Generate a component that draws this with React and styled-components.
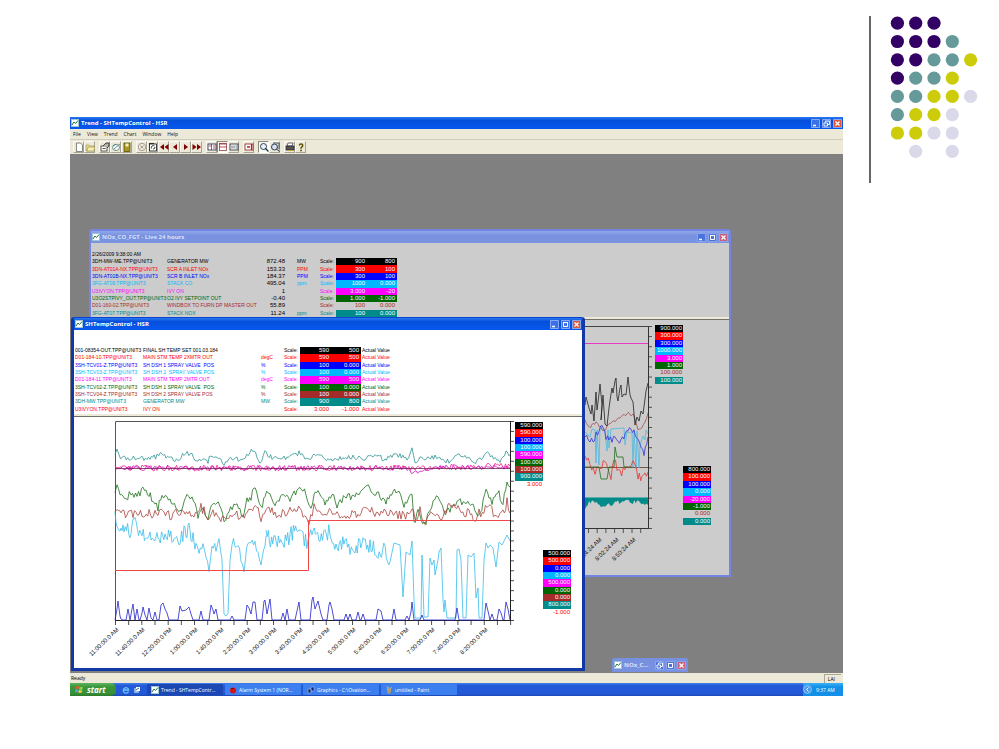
import React from "react";
import styled, { createGlobalStyle } from "styled-components";

const DOT_ROWS = ["PPP", "PPPT", "PPTTY", "PTTY", "TTYYL", "TYYL", "YYLL", " L L"];
const DOT_COLORS = { P: "#330066", T: "#669999", Y: "#cccc0a", L: "#d9d9ea" };

const SH_TAGS = [
  { tag: "001-08354-OUT.TPP@UNIT3", text: "FINAL SH TEMP SET 001.03.184", unit: "", color: "#000", hi: "590", lo: "500" },
  { tag: "D01-184-10.TPP@UNIT3", text: "MAIN STM TEMP 2XMTR OUT", unit: "degC", color: "#f00", hi: "590", lo: "500" },
  { tag: "3SH-TCV01-Z.TPP@UNIT3", text: "SH DSH 1 SPRAY VALVE  POS", unit: "%", color: "#00f", hi: "100", lo: "0.000" },
  { tag: "3SH-TCV03-Z.TPP@UNIT3", text: "SH DSH 2  SPRAY VALVE POS", unit: "%", color: "#00b7ff", hi: "100", lo: "0.000" },
  { tag: "D01-184-11.TPP@UNIT3", text: "MAIN STM TEMP 2MTR OUT", unit: "degC", color: "#f0f", hi: "590", lo: "500" },
  { tag: "3SH-TCV02-Z.TPP@UNIT3", text: "SH DSH 1 SPRAY VALVE  POS", unit: "%", color: "#006400", hi: "100", lo: "0.000" },
  { tag: "3SH-TCV04-Z.TPP@UNIT3", text: "SH DSH 2 SPRAY VALVE POS", unit: "%", color: "#a52a2a", hi: "100", lo: "0.000" },
  { tag: "3DH-MW.TPP@UNIT3", text: "GENERATOR MW", unit: "MW", color: "#008b8b", hi: "900", lo: "800" },
  { tag: "U3IVYON.TPP@UNIT3", text: "IVY ON", unit: "", color: "#f00", hi: "3.000", lo: "-1.000", plain: true },
];

const NOX_TAGS = [
  { tag: "3DH-MW-ME.TPP@UNIT3", text: "GENERATOR MW", value: "872.48", unit: "MW", color: "#000", hi: "900", lo: "800" },
  { tag: "3DN-AT01A-NX.TPP@UNIT3", text: "SCR A INLET NOx", value: "153.33", unit: "PPM", color: "#f00", hi: "300", lo: "100" },
  { tag: "3DN-AT01B-NX.TPP@UNIT3", text: "SCR B INLET NOx", value: "184.37", unit: "PPM", color: "#00f", hi: "300", lo: "100" },
  { tag: "3FG-AT09.TPP@UNIT3", text: "STACK CO", value: "495.04", unit: "ppm", color: "#00b7ff", hi: "1000", lo: "0.000" },
  { tag: "U3IVYON.TPP@UNIT3", text: "IVY ON", value: "1", unit: "", color: "#f0f", hi: "3.000", lo: "-20" },
  { tag: "U3O2STPIVY_OUT.TPP@UNIT3", text: "O2 IVY SETPOINT OUT", value: "-0.40", unit: "", color: "#006400", hi: "1.000", lo: "-1.000" },
  { tag: "D01-160-02.TPP@UNIT3", text: "WINDBOX TO FURN DP MASTER OUT", value: "55.89", unit: "", color: "#a52a2a", hi: "100", lo: "0.000", plain: true },
  { tag: "3FG-AT07.TPP@UNIT3", text: "STACK NOX", value: "11.24", unit: "ppm", color: "#008b8b", hi: "100", lo: "0.000" },
];

const SH_TOP = ["590.000", "590.000", "100.000", "100.000", "590.000", "100.000", "100.000", "900.000", "3.000"];
const SH_BOTTOM = ["500.000", "500.000", "0.000", "0.000", "500.000", "0.000", "0.000", "800.000", "-1.000"];
const NOX_TOP = ["900.000", "300.000", "300.000", "1000.000", "3.000", "1.000", "100.000", "100.000"];
const NOX_BOTTOM = ["800.000", "100.000", "100.000", "0.000", "-20.000", "-1.000", "0.000", "0.000"];

const SH_TIMES = [
  "11:00:00.0 AM", "11:40:00.0 AM", "12:20:00.0 PM", "1:00:00.0 PM", "1:40:00.0 PM",
  "2:20:00.0 PM", "3:00:00.0 PM", "3:40:00.0 PM", "4:20:00.0 PM", "5:00:00.0 PM",
  "5:40:00.0 PM", "6:20:00.0 PM", "7:00:00.0 PM", "7:40:00.0 PM", "8:20:00.0 PM",
];

// small repeatable noise so that the curves look the same on every render
function noisy(points, amp, seed, step = 1.5) {
  let s = seed;
  const rand = () => {
    s = (s * 16807) % 2147483647;
    return s / 2147483647 - 0.5;
  };
  rand();
  rand();
  const out = [];
  for (let i = 0; i < points.length - 1; i++) {
    const [x1, y1] = points[i];
    const [x2, y2] = points[i + 1];
    const n = Math.max(1, Math.round((x2 - x1) / step));
    for (let k = 0; k < n; k++) {
      const t = k / n;
      const y = y1 + (y2 - y1) * t + rand() * amp * 2;
      out.push(`${(x1 + (x2 - x1) * t).toFixed(1)},${y.toFixed(1)}`);
    }
  }
  out.push(points[points.length - 1].join(","));
  return out.join(" ");
}

// peaks standing on a zero line
function peaks(groups, base, from, to) {
  const out = [`${from},${base}`];
  groups.forEach((g) => {
    out.push(`${g[0][0] - 2},${base}`);
    g.forEach((p) => out.push(p.join(",")));
    out.push(`${g[g.length - 1][0] + 2},${base}`);
  });
  out.push(`${to},${base}`);
  return out.join(" ");
}

const TEAL = [[115, 456], [117, 450], [119, 457], [135, 458], [150, 459], [157, 456], [162, 453], [166, 457], [178, 462], [184, 453], [192, 455], [198, 463], [204, 457], [208, 461], [212, 454], [220, 459], [224, 464], [229, 458], [240, 460], [245, 456], [250, 452], [254, 451], [260, 462], [265, 453], [272, 458], [290, 458], [299, 453], [305, 457], [310, 461], [314, 453], [325, 459], [340, 459], [350, 457], [365, 458], [378, 456], [385, 460], [392, 455], [400, 455], [407, 459], [412, 450], [415, 465], [420, 458], [435, 457], [446, 462], [452, 460], [458, 453], [465, 457], [477, 462], [486, 453], [492, 458], [500, 461], [506, 452], [510, 455]];

const GREEN = [[115, 493], [117, 486], [120, 494], [126, 499], [131, 492], [137, 497], [143, 489], [149, 494], [153, 500], [158, 508], [162, 495], [170, 499], [176, 508], [180, 511], [187, 493], [192, 497], [198, 515], [202, 507], [208, 518], [213, 504], [217, 501], [221, 510], [224, 521], [229, 510], [237, 506], [243, 516], [247, 500], [251, 499], [254, 486], [258, 500], [261, 509], [265, 495], [270, 492], [275, 503], [282, 496], [290, 498], [297, 490], [300, 486], [306, 493], [311, 509], [314, 494], [318, 490], [325, 502], [332, 494], [337, 506], [345, 497], [355, 497], [362, 490], [367, 487], [377, 494], [386, 502], [393, 491], [399, 490], [404, 504], [408, 500], [412, 491], [414, 524], [418, 512], [421, 520], [426, 523], [430, 508], [438, 497], [444, 512], [450, 511], [457, 500], [465, 504], [472, 502], [479, 518], [486, 490], [492, 502], [499, 494], [503, 503], [507, 482], [510, 487]];

const BROWN = [[115, 514], [117, 508], [121, 514], [130, 513], [142, 513], [152, 515], [161, 510], [170, 515], [182, 512], [194, 517], [201, 507], [207, 516], [216, 512], [224, 520], [232, 512], [240, 518], [250, 508], [254, 505], [261, 517], [266, 509], [278, 515], [290, 511], [300, 511], [309, 520], [314, 508], [325, 512], [340, 516], [352, 515], [364, 511], [378, 512], [392, 515], [404, 516], [412, 507], [415, 521], [420, 510], [425, 521], [432, 509], [440, 517], [448, 508], [458, 508], [466, 513], [476, 517], [487, 506], [495, 514], [503, 514], [507, 502], [510, 513]];

const CYAN_A = [[115, 519], [119, 525], [124, 524], [130, 530], [135, 523], [141, 532], [150, 534], [158, 541], [165, 536], [172, 537], [178, 539], [184, 533], [189, 529], [193, 540], [196, 543]];
const CYAN_B = [[199, 555], [203, 545], [209, 571], [212, 543], [216, 548], [219, 542], [222, 556], [224, 612], [226, 617], [228, 616], [230, 560], [232, 541], [238, 545], [244, 571], [248, 541], [255, 545], [261, 561], [265, 542]];
const CYAN_C = [[266, 536], [275, 543], [283, 541], [290, 536], [299, 524], [303, 538], [308, 545], [312, 530], [320, 541], [330, 531], [336, 545], [345, 544], [355, 551], [362, 541], [370, 546], [378, 551], [385, 548]];
const CYAN_D = [[390, 562], [394, 543], [400, 545], [403, 597], [406, 552], [410, 555], [412, 541], [414, 600], [415, 618], [421, 618], [422, 555], [424, 617], [428, 617], [430, 558], [432, 565], [434, 560], [435, 575], [438, 560], [439, 552], [441, 548], [443, 600], [444, 612], [445, 600], [447, 618], [456, 618], [457, 550], [459, 549], [461, 560], [463, 618], [466, 618], [468, 555], [471, 557], [474, 553], [476, 598], [478, 588], [479, 618], [482, 618], [484, 560], [486, 543], [488, 548], [490, 545], [493, 548], [496, 567], [499, 542], [502, 545], [504, 541], [507, 535], [510, 541]];

const BLUE = [
  [[117, 609], [118, 601], [120, 616], [121, 619]], [[128, 609]], [[132, 609], [133, 604]], [[137, 609]], [[142, 613], [143, 607], [145, 615]],
  [[149, 608], [151, 618]], [[155, 612]], [[161, 605], [163, 603], [165, 609], [167, 613]],
  [[180, 606], [182, 611], [186, 610], [189, 607], [191, 614]], [[201, 611]],
  [[211, 605], [213, 610], [214, 614], [216, 609]], [[232, 616]],
  [[247, 605], [249, 608], [251, 614], [253, 602], [255, 602]], [[264, 601], [265, 600], [267, 614], [270, 599]],
  [[283, 613]], [[287, 609]], [[297, 611], [299, 602]], [[312, 600], [313, 597], [315, 609], [318, 601], [321, 614]],
  [[329, 605], [330, 602], [332, 609]], [[346, 614]], [[350, 614]], [[358, 612]], [[363, 614]], [[378, 609], [381, 611]],
  [[394, 609]], [[407, 616]], [[411, 612], [412, 602]], [[422, 615]], [[457, 608]], [[486, 603], [488, 611]], [[492, 614]],
  [[499, 609], [501, 613]], [[506, 602], [508, 609]],
];

const NOX_BLACK = "585,405 586,397 589,408 591,414 592,405 594,421 596,392 597,410 599,394 600,384 602,405 601,420 603,395 605,424 607,426 609,408 611,394 612,388 613,393 615,381 616,378 617,397 618,401 620,388 621,385 622,397 624,394 626,395 628,377 630,395 631,398 633,402 635,425 637,417 639,421 641,411 643,414 645,399 646,391 648,383";
const NOX_BROWN = [[585, 418], [589, 428], [596, 423], [604, 430], [612, 422], [620, 418], [627, 413], [633, 415], [638, 428], [642, 429], [648, 413]];
const NOX_BLUE = [[585, 436], [590, 442], [596, 436], [602, 427], [606, 438], [615, 440], [621, 443], [628, 430], [634, 432], [640, 441], [644, 455], [648, 437]];
const NOX_CYAN = "585,432 590,437 592,429 595,430 596,463 597,430 599,465 600,428 605,431 607,451 608,430 609,448 611,429 624,428 625,445 627,432 632,433 633,467 634,431 636,469 637,431 639,468 640,445 643,436 645,440 646,430 648,434";
const NOX_RED = [[585, 459], [590, 463], [595, 473], [600, 469], [605, 461], [611, 476], [614, 459], [620, 474], [628, 466], [633, 460], [638, 476], [642, 479], [648, 472]];
const NOX_STACK = [[585, 507], [589, 503], [595, 502], [601, 506], [612, 504], [618, 502], [630, 502], [640, 502], [648, 505]];

const range = (n) => Array.from({ length: n }, (_, i) => i);

function TrendIcon() {
  return (
    <svg width="8" height="8" viewBox="0 0 8 8">
      <rect x="0.5" y="0.5" width="7" height="7" fill="#fff" stroke="#9fc4d8" />
      <path d="M1 6 L3 3 L4.5 4.5 L7 1.5" fill="none" stroke="#1c7a3c" />
    </svg>
  );
}

const TOOL_ICONS = {
  new: <path d="M2.5 1h4l2 2v6.500h-6z" fill="#fff" stroke="#555" strokeWidth="0.7" />,
  open: (
    <>
      <path d="M1 3h3l1 1h4v5H1z" fill="#e6d98a" stroke="#8a8040" strokeWidth="0.5" />
      <path d="M2 9l1-4h7l-1 4z" fill="#f4ecb0" stroke="#8a8040" strokeWidth="0.5" />
    </>
  ),
  properties: (
    <>
      <rect x="1" y="4" width="6" height="5" fill="#fff" stroke="#333" strokeWidth="0.8" />
      <path d="M3 4l3-3h3v3l-2 2M2.500 6.500h3" fill="#b5b5a5" stroke="#222" strokeWidth="0.8" />
    </>
  ),
  edit: (
    <>
      <ellipse cx="5" cy="5.500" rx="3.500" ry="3" fill="#fff" stroke="#477" strokeWidth="0.8" />
      <path d="M3 7l6-5M2 4l3-2" stroke="#477" strokeWidth="0.8" />
    </>
  ),
  save: (
    <>
      <rect x="2" y="1" width="6" height="8.500" fill="#a89a24" stroke="#554c00" strokeWidth="0.8" />
      <rect x="3.500" y="1.500" width="3" height="3" fill="#f4efc4" />
    </>
  ),
  stop: (
    <>
      <circle cx="5" cy="5" r="3.700" fill="none" stroke="#a5a294" />
      <path d="M3.500 3.500l3 3M6.500 3.500l-3 3" stroke="#a5a294" />
    </>
  ),
  refresh: (
    <>
      <rect x="1.500" y="2" width="7" height="7" fill="#fff" stroke="#111" strokeWidth="0.8" />
      <path d="M3.500 6.500a2 2 0 0 1 3-2.500M5 7a2 2 0 0 0 2-2M1 1.500h5" fill="none" stroke="#111" strokeWidth="0.8" />
    </>
  ),
  first: <path d="M5 2v6L1 5zM9.500 2v6l-4-3z" fill="#800000" />,
  back: <path d="M7 2v6L3 5z" fill="#800000" />,
  forward: <path d="M3 2v6l4-3z" fill="#800000" />,
  last: <path d="M0.500 2v6l4-3zM5 2v6l4-3z" fill="#800000" />,
  columns: (
    <>
      <rect x="1" y="2" width="8" height="6" fill="#fff" stroke="#224" strokeWidth="0.8" />
      <path d="M4.500 2v6M6 4h2M6 6h2M2 4h2" stroke="#a22" strokeWidth="0.8" />
    </>
  ),
  split: (
    <>
      <rect x="1.500" y="1.500" width="7" height="7" fill="#fff" stroke="#844" strokeWidth="0.8" />
      <path d="M1.500 2h7M1.500 5h7" stroke="#a23" strokeWidth="0.8" />
    </>
  ),
  grid: (
    <>
      <rect x="1" y="2" width="8" height="6" fill="#fff" stroke="#223" strokeWidth="0.8" />
      <path d="M3 3.500v3M5 3.500v3M6.500 4h1.500M6.500 6h1.500" stroke="#345" strokeWidth="0.8" />
    </>
  ),
  chart: (
    <>
      <rect x="1" y="2" width="8" height="6" fill="#fff" stroke="#822" strokeWidth="0.8" />
      <path d="M7.500 2v6M3 5h3" stroke="#b22" strokeWidth="1.300" />
    </>
  ),
  zoom: (
    <>
      <circle cx="4.500" cy="4.500" r="3" fill="#eef" stroke="#134" strokeWidth="0.900" />
      <path d="M6.500 6.500l3 3" stroke="#134" strokeWidth="1.300" />
    </>
  ),
  zoomAll: (
    <>
      <path d="M3 1h6v6" fill="none" stroke="#345" strokeWidth="0.900" />
      <circle cx="4.500" cy="5" r="3" fill="#dde" stroke="#134" strokeWidth="0.900" />
      <path d="M6.500 7l3 2.500" stroke="#134" />
    </>
  ),
  print: (
    <>
      <path d="M3 1h5l-1 3H2z" fill="#fff" stroke="#333" strokeWidth="0.700" />
      <rect x="1" y="4" width="8" height="4" fill="#555" stroke="#222" strokeWidth="0.700" />
      <path d="M2 8.500h6" stroke="#ba3" />
    </>
  ),
  help: (
    <>
      <path d="M3.500 3.500a1.600 1.600 0 1 1 2.400 1.400c-.6.400-.9.700-.9 1.800" fill="none" stroke="#5b5200" strokeWidth="1.500" />
      <circle cx="5" cy="8.500" r="0.900" fill="#5b5200" />
    </>
  ),
};

const TOOL_GROUPS = [
  ["new", "open"],
  ["properties", "edit", "save"],
  ["stop", "refresh", "first", "back", "forward", "last"],
  ["columns", "split", "grid"],
  ["chart"],
  ["zoom", "zoomAll"],
  ["print", "help"],
];

const PRESSED = ["split", "zoom"];

function Controls({ kinds = ["min", "max", "close"], dim }) {
  const shapes = {
    min: <path d="M2 6.500h3" stroke="#fff" strokeWidth="1.500" />,
    max: <path d="M2 2.500h5M2.500 2v4.500h4V2" fill="none" stroke="#fff" />,
    restore: <path d="M3.500 3.500V2h4v3.500H6M2 4h3.500v3H2z" fill="none" stroke="#fff" strokeWidth="0.900" />,
    close: <path d="M2.500 2.500l4 4M6.500 2.500l-4 4" stroke="#fff" strokeWidth="1.200" />,
  };
  return (
    <ControlRow>
      {kinds.map((k) => (
        <ControlButton key={k} aria-label={k} $close={k === "close"} $dim={dim}>
          <svg width="9" height="9" viewBox="0 0 9 9">{shapes[k]}</svg>
        </ControlButton>
      ))}
    </ControlRow>
  );
}

function TagTable({ tags, live }) {
  return (
    <TagGrid $live={live}>
      <colgroup>
        <Col $w={live ? 75 : 68} />
        <Col $w={live ? 88 : 118} />
        {live && <Col $w={30} />}
        <Col $w={live ? 35 : 23} />
        <Col $w={16} />
        <Col $w={31} />
        <Col $w={30} />
        {!live && <Col $w={36} />}
      </colgroup>
      <tbody>
        {tags.map((t) => (
          <TagRow key={t.tag} $color={t.color}>
            <td>{t.tag}</td>
            <td>{t.text}</td>
            {live && <ValueCell>{t.value}</ValueCell>}
            <UnitCell $live={live}>{t.unit}</UnitCell>
            <td>Scale:</td>
            <ScaleCell $color={t.color} $plain={t.plain}>{t.hi}</ScaleCell>
            <ScaleCell $color={t.color} $plain={t.plain}>{t.lo}</ScaleCell>
            {!live && <ActualCell>Actual Value</ActualCell>}
          </TagRow>
        ))}
      </tbody>
    </TagGrid>
  );
}

function Legend({ values, tags, low }) {
  return (
    <LegendBox $rows={values.length} $low={low}>
      {values.map((v, i) => (
        <LegendItem key={i} $color={tags[i].color} $plain={tags[i].plain}>{v}</LegendItem>
      ))}
    </LegendBox>
  );
}

function Curve({ points, color }) {
  return <polyline points={points} fill="none" stroke={color} strokeWidth="0.8" />;
}

function TimeLabel({ x, y, children }) {
  return (
    <AxisText x={x} y={y} textAnchor="end" transform={`rotate(-44 ${x} ${y})`}>
      {children}
    </AxisText>
  );
}

function ShChart() {
  return (
    <ChartSvg viewBox="74 417 441 251">
      <path d="M115.500 620.500V421.500H510.500" fill="none" stroke="#555" />
      <Curve points={noisy(TEAL, 2.5, 77)} color="#2f9494" />
      <Curve points={noisy([[115, 468], [412, 468], [510, 466]], 3, 12)} color="#f0208c" />
      <Curve points={noisy([[115, 468], [404, 468], [413, 472], [440, 467], [510, 468]], 2.5, 431)} color="#d010c0" />
      <path d="M115 468.500H510" stroke="#702050" strokeWidth="0.8" />
      <Curve points={noisy(GREEN, 3.5, 391)} color="#1c701c" />
      <Curve points={noisy(BROWN, 5, 93)} color="#a8423c" />
      <Curve points={noisy(CYAN_A, 8, 1931, 1.1)} color="#39bdea" />
      <Curve points={noisy([CYAN_A[CYAN_A.length - 1], ...CYAN_B, CYAN_C[0]], 4, 55)} color="#39bdea" />
      <Curve points={noisy([...CYAN_C, CYAN_D[0]], 8, 871, 1.2)} color="#39bdea" />
      <Curve points={CYAN_D.map((p) => p.join(",")).join(" ")} color="#39bdea" />
      <path d="M115 570.500H308.500V520.500H510" fill="none" stroke="#f04848" />
      <path d="M510.500 421V620.500H115" fill="none" stroke="#222" />
      <Curve points={peaks(BLUE, 620, 115, 510)} color="#2222cc" />
      {range(21).map((i) => (
        <path key={i} d={`M510 ${421.5 + i * 9.95}h4`} stroke="#222" strokeWidth="0.8" />
      ))}
      {range(31).map((i) => (
        <path key={i} d={`M${115.5 + i * 13.17} 620v5`} stroke="#222" strokeWidth="0.8" />
      ))}
      {SH_TIMES.map((t, i) => (
        <TimeLabel key={t} x={119 + Math.round(i * 26.33)} y={630}>{t}</TimeLabel>
      ))}
    </ChartSvg>
  );
}

function NoxChart() {
  return (
    <ChartSvg viewBox="91 320 564 254">
      <path d="M130 326.500H648.500" stroke="#444" />
      <path d="M130 343.500H648" stroke="#e838c8" />
      <path d="M130 467.500H648" stroke="#7a5848" />
      <polygon points={`585,497.500 ${noisy(NOX_STACK, 2.5, 311)} 648,497.500`} fill="#008b8b" />
      <Curve points={NOX_CYAN} color="#4cb8e0" />
      <Curve points={noisy(NOX_BROWN, 2, 37)} color="#a05050" />
      <Curve points={noisy(NOX_RED, 4, 871)} color="#e83030" />
      <Curve points={noisy(NOX_BLUE, 4, 153)} color="#3030e0" />
      <Curve points="585,467 599,467 601,479 607,479 609,467 614,467 615,447 617,457 623,457 624,467 632,467" color="#207020" />
      <Curve points={NOX_BLACK} color="#222" />
      <path d="M648.500 326V528.500H130" fill="none" stroke="#333" />
      {range(21).map((i) => (
        <path key={i} d={`M648 ${326.5 + i * 10.1}h4`} stroke="#333" strokeWidth="0.8" />
      ))}
      {range(7).map((i) => (
        <path key={i} d={`M${588.5 + i * 8.7} 528v5`} stroke="#333" strokeWidth="0.8" />
      ))}
      <TimeLabel x={602} y={540}>7:14:24 AM</TimeLabel>
      <TimeLabel x={619} y={540}>8:02:24 AM</TimeLabel>
      <TimeLabel x={636} y={540}>8:50:24 AM</TimeLabel>
    </ChartSvg>
  );
}

function App() {
  return (
    <>
      <GlobalStyle />
      <Slide>
        <Desktop>
          <TitleBar>
            <TrendIcon />
            <TitleText>Trend - SHTempControl - HSR</TitleText>
            <Controls kinds={["min", "restore", "close"]} />
          </TitleBar>
          <MenuBar>
            {["File", "View", "Trend", "Chart", "Window", "Help"].map((m) => (
              <MenuItem key={m}>{m}</MenuItem>
            ))}
          </MenuBar>
          <Toolbar>
            {TOOL_GROUPS.map((group) => (
              <ToolGroup key={group[0]}>
                {group.map((name) => (
                  <ToolButton key={name} aria-label={name} $pressed={PRESSED.includes(name)}>
                    <svg width="10" height="10" viewBox="0 0 10 10">{TOOL_ICONS[name]}</svg>
                  </ToolButton>
                ))}
              </ToolGroup>
            ))}
          </Toolbar>

          <Workspace>
            <NoxWindow>
              <TitleBar $dim>
                <TrendIcon />
                <TitleText $dim>NOx_CO_FGT - Live 24 hours</TitleText>
                <Controls dim />
              </TitleBar>
              <TagPanel $live>
                <Stamp>2/26/2009 9:38:00 AM</Stamp>
                <TagTable tags={NOX_TAGS} live />
              </TagPanel>
              <PlotPanel>
                <NoxChart />
                <Legend values={NOX_TOP} tags={NOX_TAGS} />
                <Legend values={NOX_BOTTOM} tags={NOX_TAGS} low />
              </PlotPanel>
            </NoxWindow>

            <ShWindow>
              <TitleBar>
                <TrendIcon />
                <TitleText>SHTempControl - HSR</TitleText>
                <Controls />
              </TitleBar>
              <TagPanel>
                <TagTable tags={SH_TAGS} />
              </TagPanel>
              <PlotPanel>
                <ShChart />
                <Legend values={SH_TOP} tags={SH_TAGS} />
                <Legend values={SH_BOTTOM} tags={SH_TAGS} low />
              </PlotPanel>
            </ShWindow>

            <MinimizedWindow>
              <TrendIcon />
              <TitleText $dim>NOx_C...</TitleText>
              <Controls kinds={["restore", "max", "close"]} dim />
            </MinimizedWindow>
          </Workspace>

          <StatusBar>
            <span>Ready</span>
            <StatusCell>LAI</StatusCell>
          </StatusBar>

          <Taskbar>
            <StartButton>
              <svg width="9" height="9" viewBox="0 0 9 9">
                <path d="M1 1.500q1.500-1 3 0L3.500 4q-1.500-.8-3 0z" fill="#f0562c" />
                <path d="M4.700 1.800q1.500.8 3.300 0L7.300 4.400q-1.700.8-3.100 0z" fill="#8cd44c" />
                <path d="M.4 4.700q1.500-.8 3 0L2.800 7.300q-1.500-.8-3 0z" fill="#5b9cf0" />
                <path d="M4 5q1.500.8 3.200 0L6.600 7.600q-1.700.8-3.200 0z" fill="#fccf3c" />
              </svg>
              start
            </StartButton>
            <QuickLaunch>
              <svg width="8" height="8" viewBox="0 0 8 8">
                <path d="M6.500 5.500A2.700 2.700 0 1 1 6.700 4H2" fill="none" stroke="#6cc4ff" strokeWidth="1.300" />
              </svg>
              <svg width="8" height="8" viewBox="0 0 8 8">
                <rect x="1" y="2" width="5" height="5" rx="1" fill="#8fb8e8" />
                <path d="M3 1h4v4H3z" fill="#fff" />
                <path d="M3 4l3-2" stroke="#36a" />
              </svg>
            </QuickLaunch>
            <TaskButton $active><TrendIcon />Trend - SHTempContr...</TaskButton>
            <TaskButton>
              <svg width="8" height="8" viewBox="0 0 8 8">
                <circle cx="4" cy="4.500" r="3" fill="#d41414" />
                <path d="M2 2.500h3" stroke="#701010" />
              </svg>
              Alarm System 1 (NOR...
            </TaskButton>
            <TaskButton>
              <svg width="8" height="8" viewBox="0 0 8 8">
                <path d="M1 3h3v4H1zM4 1h3v4H4z" fill="#13246c" stroke="#9cc4f4" strokeWidth="0.600" />
              </svg>
              Graphics - C:\Ovation...
            </TaskButton>
            <TaskButton>
              <svg width="8" height="8" viewBox="0 0 8 8">
                <path d="M2 3h4L5.500 7.500h-3z" fill="#b99864" />
                <path d="M3 4L2 .5M4 4V.5M5 4L6.500 1" stroke="#e0b060" strokeWidth="0.900" />
              </svg>
              untitled - Paint
            </TaskButton>
            <Tray>
              <svg width="9" height="9" viewBox="0 0 9 9">
                <circle cx="4.500" cy="4.500" r="4" fill="#4b9cf0" stroke="#b8e0ff" strokeWidth="0.600" />
                <path d="M5.500 2.500l-2 2 2 2" fill="none" stroke="#fff" />
              </svg>
              9:37 AM
            </Tray>
          </Taskbar>
        </Desktop>

        <Ornament>
          <svg width="128" height="167" viewBox="871 16 128 167">
            {DOT_ROWS.map((row, r) =>
              row.split("").map((c, i) =>
                c === " " ? null : (
                  <circle key={`${r}-${i}`} cx={897.4 + i * 18.3} cy={23.2 + r * 18.3} r="6.6" fill={DOT_COLORS[c]} />
                )
              )
            )}
          </svg>
        </Ornament>
      </Slide>
    </>
  );
}

const GlobalStyle = createGlobalStyle`
  * {
    box-sizing: border-box;
  }

  body {
    margin: 0;
    background: #fff;
    font-family: "Liberation Sans", Arial, sans-serif;
    font-size: 6px;
  }

  button {
    padding: 0;
    border: none;
    background: none;
    font: inherit;
    color: inherit;
  }

  svg {
    display: block;
    flex: none;
  }
`;

const Slide = styled.main`
  min-height: 100vh;
  display: flex;
  align-items: stretch;
  gap: 26px;
  padding: 16px 0 53px 70px;
`;

const Desktop = styled.section`
  flex: 1;
  min-width: 0;
  margin-top: 101px;
  display: flex;
  flex-direction: column;
`;

const Ornament = styled.aside`
  flex: none;
  align-self: flex-start;
  border-left: 2px solid #666;
`;

const TitleBar = styled.header`
  flex: none;
  height: 12px;
  display: flex;
  align-items: center;
  gap: 2px;
  padding: 0 1px;
  background: ${({ $dim }) =>
    $dim
      ? "linear-gradient(#8ea8ea, #7890de 40%, #7a96e2)"
      : "linear-gradient(#2a78f0, #0450dc 30%, #0658ee)"};
`;

const TitleText = styled.span`
  flex: 1;
  min-width: 0;
  overflow: hidden;
  white-space: nowrap;
  font-family: "Open Sans", "Noto Sans", sans-serif;
  font-size: 6px;
  line-height: 8px;
  font-weight: 700;
  color: ${({ $dim }) => ($dim ? "#d6e0fa" : "#fff")};
`;

const ControlRow = styled.div`
  display: flex;
  gap: 2px;
`;

const ControlButton = styled.button`
  width: 9px;
  height: 9px;
  border-radius: 1px;
  background: ${({ $close, $dim }) =>
    $close ? ($dim ? "#c8607c" : "#e0583a") : $dim ? "#4a74dc" : "#3a70e8"};
  box-shadow: inset 0 0 0 1px ${({ $dim }) => ($dim ? "#8ca6ee" : "#86a8f4")};
`;

const MenuBar = styled.nav`
  flex: none;
  height: 11px;
  display: flex;
  align-items: center;
  gap: 6px;
  padding-left: 3px;
  background: #ece9d8;
  border-bottom: 1px solid #cfccbc;
`;

const MenuItem = styled.button`
  font-family: "Open Sans", "Noto Sans", sans-serif;
  font-size: 5px;
  line-height: 8px;
  color: #111;
`;

const Toolbar = styled.div`
  flex: none;
  height: 14px;
  display: flex;
  align-items: center;
  gap: 4px;
  padding-left: 3px;
  background: #ece9d8;
`;

const ToolGroup = styled.div`
  display: flex;
`;

const ToolButton = styled.button`
  width: 11px;
  height: 12px;
  display: flex;
  align-items: center;
  justify-content: center;
  border: 1px solid;
  border-color: ${({ $pressed }) =>
    $pressed ? "#8c897a #fff #fff #8c897a" : "#fbfaf4 #a5a294 #a5a294 #fbfaf4"};
  background: ${({ $pressed }) => ($pressed ? "#f8f7f0" : "transparent")};
`;

const Workspace = styled.div`
  position: relative;
  flex: 1;
  min-height: 500px;
  overflow: hidden;
  background: #808080;
`;

const ChildWindow = styled.section`
  position: absolute;
  display: flex;
  flex-direction: column;
`;

const NoxWindow = styled(ChildWindow)`
  left: 19px;
  top: 75px;
  width: 642px;
  height: 348px;
  border: 2px solid #7484e0;
  border-radius: 3px 3px 0 0;
  background: #ccc;
`;

const ShWindow = styled(ChildWindow)`
  left: 1px;
  top: 163px;
  width: 514px;
  height: 354px;
  border: 3px solid #1238a8;
  border-top: 1px solid #0a44cc;
  border-radius: 3px 3px 0 0;
  background: #fff;
`;

const MinimizedWindow = styled.section`
  position: absolute;
  left: 542px;
  top: 504px;
  width: 76px;
  height: 14px;
  display: flex;
  align-items: center;
  gap: 2px;
  padding: 0 2px;
  border-radius: 2px 2px 0 0;
  background: #7890e0;
`;

const TagPanel = styled.div`
  flex: none;
  height: ${({ $live }) => ($live ? 77 : 87)}px;
  padding: ${({ $live }) => ($live ? "7px 0 0 1px" : "17px 0 0 1px")};
  border-bottom: 1px solid #706f68;
  box-shadow: inset 0 -2px 0 #ece9d8;
  font-size: 5px;
`;

const Stamp = styled.div`
  height: 8px;
  line-height: 8px;
`;

const TagGrid = styled.table`
  width: ${({ $live }) => ($live ? 305 : 322)}px;
  height: ${({ $live }) => ($live ? 59 : 66)}px;
  table-layout: fixed;
  border-collapse: collapse;
`;

const Col = styled.col`
  width: ${({ $w }) => $w}px;
`;

const TagRow = styled.tr`
  color: ${({ $color }) => $color};

  td {
    padding: 0;
    font-size: 5px;
    line-height: 7px;
    white-space: pre;
  }
`;

const ValueCell = styled.td`
  && {
    color: #000;
    text-align: right;
    font-size: 6px;
  }
`;

const UnitCell = styled.td`
  && {
    padding-left: ${({ $live }) => ($live ? 12 : 0)}px;
  }
`;

const ScaleCell = styled.td`
  && {
    padding-right: 2px;
    font-size: 6px;
    text-align: right;
    color: ${({ $plain, $color }) => ($plain ? $color : "#fff")};
    background: ${({ $plain, $color }) => ($plain ? "transparent" : $color)};
  }
`;

const ActualCell = styled.td`
  && {
    padding-left: 1px;
  }
`;

const PlotPanel = styled.div`
  flex: 1;
  min-height: 0;
  display: flex;
  align-items: flex-start;
`;

const ChartSvg = styled.svg`
  flex: none;
  width: ${({ viewBox }) => viewBox.split(" ")[2]}px;
  height: ${({ viewBox }) => viewBox.split(" ")[3]}px;
`;

const AxisText = styled.text`
  font-size: 6px;
  fill: #111;
`;

const LegendBox = styled.div`
  flex: none;
  width: 28px;
  height: ${({ $rows }) => ($rows === 9 ? 66 : 59)}px;
  margin-top: ${({ $low, $rows }) => ($low ? ($rows === 9 ? 133 : 146) : 5)}px;
  display: grid;
  grid-auto-rows: 1fr;
`;

const LegendItem = styled.span`
  padding-right: 1px;
  font-size: 6px;
  line-height: 7px;
  text-align: right;
  color: ${({ $plain, $color }) => ($plain ? $color : "#fff")};
  background: ${({ $plain, $color }) => ($plain ? "transparent" : $color)};
`;

const StatusBar = styled.footer`
  flex: none;
  height: 10px;
  display: flex;
  align-items: center;
  justify-content: space-between;
  padding: 0 2px 0 1px;
  background: #ece9d8;
  font-family: "Open Sans", "Noto Sans", sans-serif;
  font-size: 5px;
  line-height: 8px;
`;

const StatusCell = styled.span`
  padding: 0 6px 0 3px;
  border-left: 1px solid #aca899;
  border-top: 1px solid #aca899;
`;

const Taskbar = styled.footer`
  flex: none;
  height: 13px;
  display: flex;
  align-items: stretch;
  gap: 2px;
  background: linear-gradient(#4282ea, #2459d8 20%, #2358d6 85%, #1c46b0);
  color: #fff;
  font-family: "Open Sans", "Noto Sans", sans-serif;
  font-size: 5px;
`;

const StartButton = styled.button`
  width: 46px;
  display: flex;
  align-items: center;
  gap: 3px;
  padding-left: 5px;
  border-radius: 0 5px 5px 0;
  background: linear-gradient(#5cb45c, #3a963a 30%, #389038 80%, #2a7a2a);
  font-size: 8px;
  line-height: 12px;
  font-weight: 700;
  font-style: italic;
`;

const QuickLaunch = styled.div`
  width: 27px;
  display: flex;
  align-items: center;
  gap: 3px;
  padding-left: 4px;
`;

const TaskButton = styled.button`
  width: 76px;
  margin: 1px 0;
  display: flex;
  align-items: center;
  gap: 2px;
  padding-left: 4px;
  overflow: hidden;
  white-space: nowrap;
  border-radius: 1px;
  background: ${({ $active }) => ($active ? "#1c48b4" : "#3c80f0")};
`;

const Tray = styled.div`
  width: 40px;
  margin-left: auto;
  display: flex;
  align-items: center;
  gap: 4px;
  background: linear-gradient(#3cb0f4, #1290e8 30%, #1290e8);
`;

export default App;
